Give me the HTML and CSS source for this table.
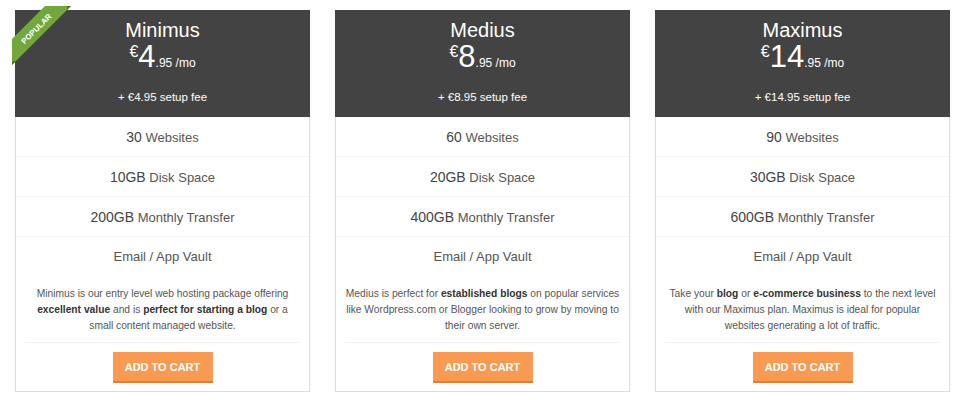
FILE: index.html
```html
<!DOCTYPE html>
<html>
<head>
<meta charset="utf-8">
<link rel="stylesheet" href="styles.css">
</head>
<body>
<div class="plans">
  <div class="card">
    <svg class="ribbon" width="70" height="70" viewBox="-5 -5 70 70">
      <polygon points="-4,29 -4,55 55,-4 29,-4" fill="#71a73b"/>
      <polygon points="0,51 -4,55 -4,51" fill="#4d7624"/>
      <polygon points="51,0 55,-4 51,-4" fill="#4d7624"/>
      <text transform="translate(20.5,19) rotate(-45)" text-anchor="middle" dominant-baseline="central" class="ribbon-text">POPULAR</text>
    </svg>
    <div class="head">
      <div class="title">Minimus</div>
      <div class="price"><span class="cur">€</span>4<span class="cents">.95 /mo</span></div>
      <div class="setup">+ €4.95 setup fee</div>
    </div>
    <ul class="features">
      <li><span class="num">30</span> Websites</li>
      <li><span class="num">10GB</span> Disk Space</li>
      <li><span class="num">200GB</span> Monthly Transfer</li>
      <li>Email / App Vault</li>
    </ul>
    <p class="desc">Minimus is our entry level web hosting package offering <b>excellent value</b> and is <b>perfect for starting a blog</b> or a small content managed website.</p>
    <div class="action"><button class="cart">ADD TO CART</button></div>
  </div>

  <div class="card">
    <div class="head">
      <div class="title">Medius</div>
      <div class="price"><span class="cur">€</span>8<span class="cents">.95 /mo</span></div>
      <div class="setup">+ €8.95 setup fee</div>
    </div>
    <ul class="features">
      <li><span class="num">60</span> Websites</li>
      <li><span class="num">20GB</span> Disk Space</li>
      <li><span class="num">400GB</span> Monthly Transfer</li>
      <li>Email / App Vault</li>
    </ul>
    <p class="desc">Medius is perfect for <b>established blogs</b> on popular services like Wordpress.com or Blogger looking to grow by moving to their own server.</p>
    <div class="action"><button class="cart">ADD TO CART</button></div>
  </div>

  <div class="card">
    <div class="head">
      <div class="title">Maximus</div>
      <div class="price"><span class="cur">€</span>14<span class="cents">.95 /mo</span></div>
      <div class="setup">+ €14.95 setup fee</div>
    </div>
    <ul class="features">
      <li><span class="num">90</span> Websites</li>
      <li><span class="num">30GB</span> Disk Space</li>
      <li><span class="num">600GB</span> Monthly Transfer</li>
      <li>Email / App Vault</li>
    </ul>
    <p class="desc">Take your <b>blog</b> or <b>e-commerce business</b> to the next level with our Maximus plan. Maximus is ideal for popular websites generating a lot of traffic.</p>
    <div class="action"><button class="cart">ADD TO CART</button></div>
  </div>
</div>
</body>
</html>
```

FILE: styles.css
```css
* { box-sizing: border-box; }
html, body { margin: 0; padding: 0; background: #fff; }
body { font-family: "Liberation Sans", Arial, sans-serif; color: #555; }

.plans {
  display: grid;
  grid-template-columns: repeat(3, 295px);
  gap: 25px;
  justify-content: center;
  padding-top: 10px;
}

.card {
  position: relative;
  border: 1px solid #dcdcdc;
  border-top: 0;
  background: #fff;
  box-shadow: 0 1px 2px rgba(0,0,0,0.06);
  height: 382px;
  display: flex;
  flex-direction: column;
}

.ribbon {
  position: absolute;
  left: -5px;
  top: -5px;
  overflow: visible;
  z-index: 2;
}
.ribbon-text {
  font-family: "Liberation Sans", Arial, sans-serif;
  font-weight: bold;
  font-size: 8px;
  fill: #fff;
}

.head {
  background: #434343;
  color: #fff;
  text-align: center;
  height: 107px;
  padding-top: 8px;
  margin: 0 -1px;
}
.title {
  font-size: 20px;
  line-height: 24px;
}
.price {
  font-size: 31px;
  line-height: 30px;
  height: 30px;
}
.cur {
  font-size: 16px;
  line-height: 1;
  vertical-align: 10px;
}
.cents {
  font-size: 12px;
}
.setup {
  margin-top: 17px;
  font-size: 11.5px;
  line-height: 16px;
}

.features {
  list-style: none;
  margin: 0;
  padding: 0;
}
.features li {
  height: 40px;
  line-height: 40px;
  text-align: center;
  font-size: 13px;
  color: #555;
  border-bottom: 1px solid #f4f4f4;
}
.features li:last-child { border-bottom: 0; }
.num {
  font-size: 14px;
  color: #444;
}

.desc {
  margin: 0 9px;
  padding: 9px 0 8px;
  text-align: center;
  font-size: 10.25px;
  line-height: 16px;
  color: #555;
  border-bottom: 1px solid #f1f1f1;
}
.desc b { color: #333; }

.action {
  display: flex;
  justify-content: center;
  padding-top: 9px;
}
.cart {
  width: 100px;
  height: 31px;
  border: 0;
  border-bottom: 2px solid #e37f34;
  background: #f89a52;
  color: #fff;
  font-family: "Liberation Sans", Arial, sans-serif;
  font-weight: bold;
  font-size: 11px;
  padding: 0;
  cursor: pointer;
}
```
